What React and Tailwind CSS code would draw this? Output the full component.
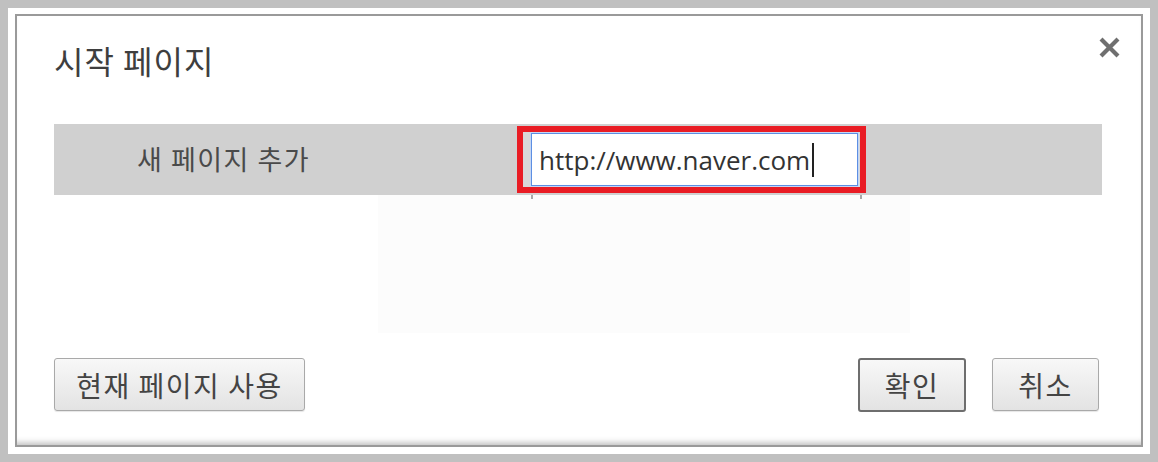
export default function App() {
  const kr = { fontFamily: '"Noto Sans CJK KR", "Noto Sans", sans-serif' };
  return (
    <div className="w-[1158px] h-[462px] bg-[#c0c0c0] p-[8px] pb-[8px]">
      <div className="w-full h-full bg-white p-[7px] pt-[6px]">
        <div className="w-full h-full border-2 border-[#9a9a9a] bg-white">
          <div className="relative w-full h-full flex flex-col px-[37px] pt-[26px] shadow-[inset_0_-7px_6px_-5px_rgba(0,0,0,0.28)]">
            <button className="absolute top-[21px] right-[21px] w-[21px] h-[21px] flex items-center justify-center">
              <svg width="21" height="21" viewBox="0 0 21 21">
                <path d="M3.5 3.5 L17.5 17.5 M17.5 3.5 L3.5 17.5" stroke="#6f6f6f" strokeWidth="4.2" strokeLinecap="square" />
              </svg>
            </button>
            <div className="text-[32px] leading-[36px] text-[#3e3e3e] tracking-[1px]" style={kr}>
              시작 페이지
            </div>
            <div className="mt-[46px] w-[1048px] h-[71px] bg-[#d0d0d0] flex items-center">
              <div className="w-[463px] pl-[83px] text-[27px] text-[#4a4a4a] tracking-[1.5px]" style={kr}>
                새 페이지 추가
              </div>
              <div className="w-[349px] h-[67px] border-[6px] border-[#e91c24] bg-[#d8d8d8] pl-[8px] pr-[2px] py-[1px] flex">
                <div className="flex-1 h-full border border-[#5d8fe3] bg-white flex items-center pl-[7px] shadow-[0_0_0_1px_#c4d6f4]">
                  <span className="text-[26px] text-[#333] leading-none" style={{ fontFamily: '"Open Sans", "Noto Sans", sans-serif' }}>
                    http://www.naver.com
                  </span>
                  <span className="ml-[2px] w-[2px] h-[34px] bg-[#222]" />
                </div>
              </div>
            </div>
            <div className="relative h-[163px] w-[1048px]">
              <div className="ml-[324px] w-[532px] h-[138px] bg-[#fcfcfc]" />
              <div className="absolute left-[477px] top-0 w-[2px] h-[4px] bg-[#a8a8a8]" />
              <div className="absolute left-[806px] top-0 w-[2px] h-[4px] bg-[#a8a8a8]" />
            </div>
            <div className="flex justify-between w-[1045px]">
              <button className="w-[251px] h-[53px] rounded-[3px] border border-[#a9a9a9] bg-gradient-to-b from-[#f8f8f8] to-[#e3e3e3] text-[28px] leading-none tracking-[1.5px] text-[#444] shadow-[0_1px_1px_rgba(0,0,0,0.1)]" style={kr}>
                현재 페이지 사용
              </button>
              <div className="flex gap-[26px]">
                <button className="w-[108px] h-[54px] rounded-[3px] border-2 border-[#6e6e6e] bg-gradient-to-b from-[#f8f8f8] to-[#e3e3e3] text-[28px] leading-none tracking-[1.5px] text-[#444]" style={kr}>
                  확인
                </button>
                <button className="w-[107px] h-[53px] rounded-[3px] border border-[#a9a9a9] bg-gradient-to-b from-[#f8f8f8] to-[#e3e3e3] text-[28px] leading-none tracking-[1.5px] text-[#444] shadow-[0_1px_1px_rgba(0,0,0,0.1)]" style={kr}>
                  취소
                </button>
              </div>
            </div>
          </div>
        </div>
      </div>
    </div>
  );
}
